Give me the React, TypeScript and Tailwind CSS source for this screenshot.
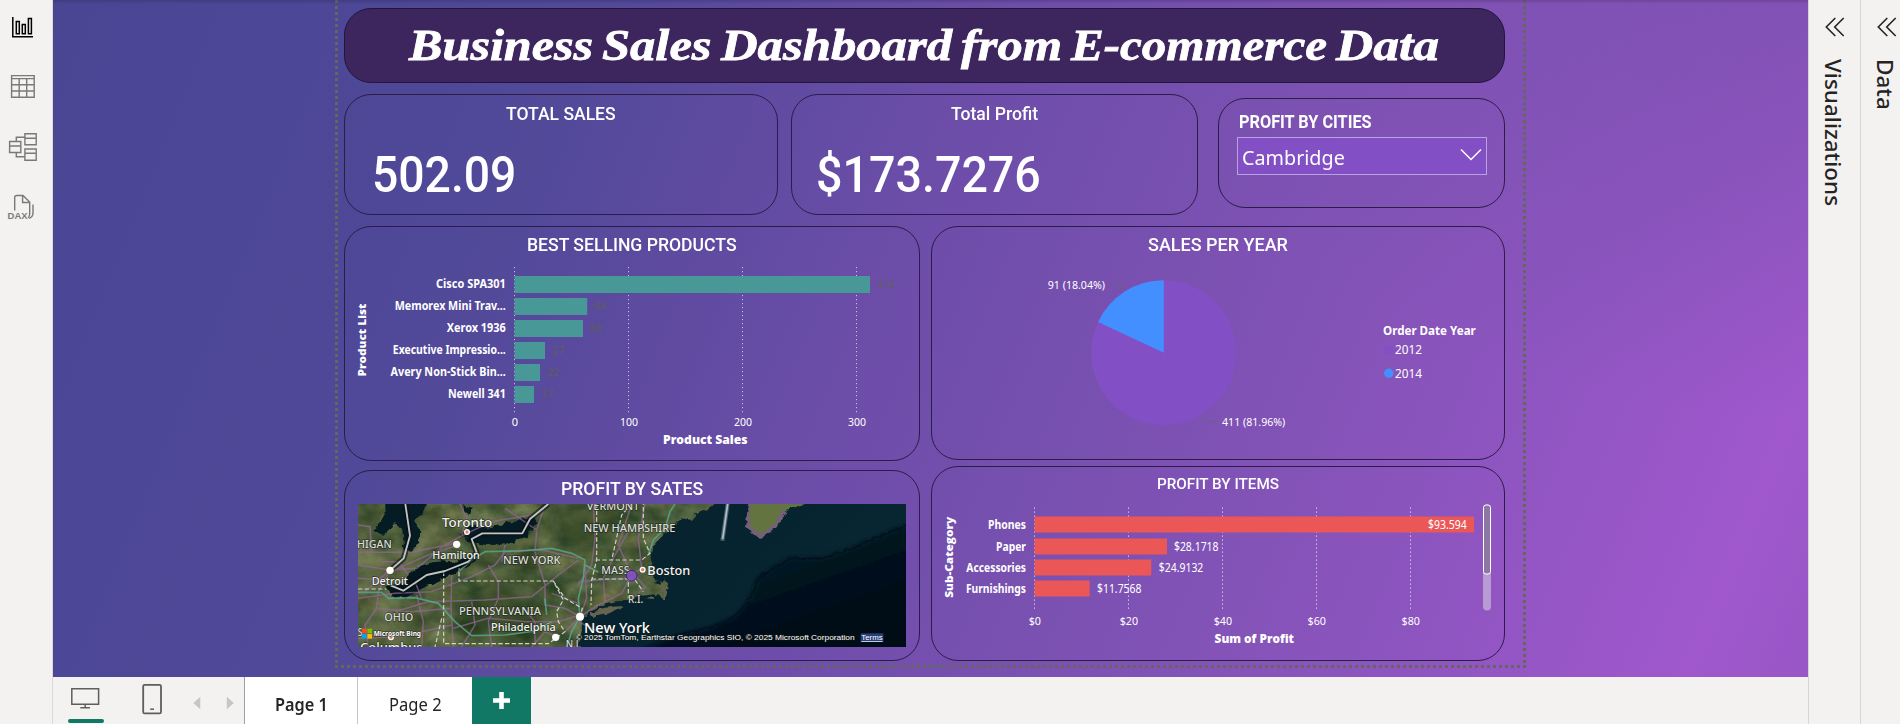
import React, { useLayoutEffect, useRef, useState } from "react";

const UI = "font-['Noto_Sans','Open_Sans',sans-serif]";
const DIN = "font-['Roboto',sans-serif]";

/* Squeezes or widens a single line of text to a given width. */
function Fit({ w, children, className = "" }: { w: number; children: string; className?: string }) {
  const ref = useRef<HTMLSpanElement>(null);
  const [scale, setScale] = useState(1);
  useLayoutEffect(() => {
    if (ref.current) setScale(w / ref.current.offsetWidth);
  }, [w]);
  return (
    <span className={`inline-block text-left whitespace-nowrap ${className}`} style={{ width: w }}>
      <span ref={ref} className="inline-block origin-left" style={{ transform: `scaleX(${scale})` }}>
        {children}
      </span>
    </span>
  );
}

function Card({ className, children }: { className: string; children: React.ReactNode }) {
  return (
    <section className={`overflow-hidden rounded-[27px] border border-[#2b1c48] ${className}`}>{children}</section>
  );
}

function Label({
  x, x2, y, children, size = 11.5, weight = 400, fill = "#fff",
}: { x: number; x2: number; y: number; children: string; size?: number; weight?: number; fill?: string }) {
  return (
    <text x={x} y={y} textLength={x2 - x} lengthAdjust="spacingAndGlyphs" fontSize={size} fontWeight={weight} fill={fill}>
      {children}
    </text>
  );
}

const products = [
  { name: "Cisco SPA301", from: 436, end: 870, value: "312", v2: 895 },
  { name: "Memorex Mini Trav...", from: 394.7, end: 587.2, value: "64", v2: 606.5 },
  { name: "Xerox 1936", from: 446.7, end: 583, value: "60", v2: 602.3 },
  { name: "Executive Impressio...", from: 392.8, end: 545, value: "27", v2: 564.3 },
  { name: "Avery Non-Stick Bin...", from: 390.5, end: 540, value: "22", v2: 559.3 },
  { name: "Newell 341", from: 447.9, end: 534, value: "17", v2: 553.3 },
];

function ProductsChart() {
  return (
    <svg className={`block h-[190px] w-[573px] ${UI}`} viewBox="345 262 573 190">
      {[514.5, 628.5, 742.5, 856.5].map((x) => (
        <line key={x} x1={x} x2={x} y1="267" y2="413" stroke="#fff" strokeOpacity=".65" strokeDasharray="1.2 2.8" />
      ))}
      {products.map((p, i) => (
        <g key={p.name}>
          <rect x="514.5" y={276 + i * 22} width={p.end - 514.5} height="17" fill="#489898" />
          <Label x={p.from} x2={505.8} y={288 + i * 22} weight={700} size={12}>{p.name}</Label>
          <Label x={p.end + 7.6} x2={p.v2} y={288 + i * 22} fill="#605e5c">{p.value}</Label>
        </g>
      ))}
      <Label x={511.7} x2={518} y={425.8}>0</Label>
      <Label x={620} x2={638} y={425.8}>100</Label>
      <Label x={734} x2={752} y={425.8}>200</Label>
      <Label x={848} x2={866} y={425.8}>300</Label>
      <g className="font-['Open_Sans',sans-serif]">
        <Label x={663} x2={747.5} y={444} weight={800} size={11.5}>Product Sales</Label>
        <g transform="translate(366 376.5) rotate(-90)">
          <Label x={0} x2={73} y={0} weight={800} size={11}>Product List</Label>
        </g>
      </g>
    </svg>
  );
}

function YearPie() {
  return (
    <svg className={`block h-[190px] w-[573px] ${UI}`} viewBox="932 262 573 190">
      <circle cx="1163.8" cy="352.7" r="72.5" fill="#8250c4" />
      <path d="M1163.8 352.7V280.2A72.5 72.5 0 0 0 1098.1 322Z" fill="#438fff" />
      <path d="M1109.4 284H1121L1124.7 290M1203 415L1207.4 421.5H1218.5" fill="none" stroke="#6b6080" />
      <Label x={1047.8} x2={1105} y={289}>91 (18.04%)</Label>
      <Label x={1222} x2={1285.3} y={426}>411 (81.96%)</Label>
      <Label x={1383} x2={1475.8} y={335} size={12.5} weight={700}>Order Date Year</Label>
      <circle cx="1388.8" cy="349.7" r="4.7" fill="#8250c4" />
      <circle cx="1388.8" cy="373.3" r="4.7" fill="#438fff" />
      <Label x={1395} x2={1422} y={353.7} size={12.5}>2012</Label>
      <Label x={1395} x2={1422} y={378} size={12.5}>2014</Label>
    </svg>
  );
}

const items = [
  { name: "Phones", from: 988, y: 517, end: 1474, value: "$93.594", v1: 1428, v2: 1466.7 },
  { name: "Paper", from: 996, y: 539, end: 1167, value: "$28.1718", v1: 1173.9, v2: 1218.6 },
  { name: "Accessories", from: 966.3, y: 560, end: 1151.3, value: "$24.9132", v1: 1158.8, v2: 1203.3 },
  { name: "Furnishings", from: 965.9, y: 581, end: 1089.6, value: "$11.7568", v1: 1097, v2: 1141.5 },
];

function ItemsChart() {
  return (
    <svg className={`block h-[152px] w-[573px] ${UI}`} viewBox="932 501.5 573 152">
      {[1034.5, 1128.5, 1222.5, 1316.5, 1410.5].map((x) => (
        <line key={x} x1={x} x2={x} y1="508" y2="612" stroke="#fff" strokeOpacity=".8" strokeDasharray="1.2 2.8" />
      ))}
      {items.map((p) => (
        <g key={p.name}>
          <rect x="1034.5" y={p.y} width={p.end - 1034.5} height="16" fill="#eb5757" />
          <Label x={p.from} x2={1026} y={p.y + 12} weight={700} size={12}>{p.name}</Label>
          <Label x={p.v1} x2={p.v2} y={p.y + 12} size={12}>{p.value}</Label>
        </g>
      ))}
      <Label x={1028.7} x2={1041} y={625}>$0</Label>
      <Label x={1119.7} x2={1138} y={625}>$20</Label>
      <Label x={1213.7} x2={1232} y={625}>$40</Label>
      <Label x={1307.5} x2={1326} y={625}>$60</Label>
      <Label x={1401.6} x2={1420} y={625}>$80</Label>
      <g className="font-['Open_Sans',sans-serif]">
        <Label x={1214.6} x2={1294} y={643} weight={800} size={11.5}>Sum of Profit</Label>
        <g transform="translate(952.6 598.3) rotate(-90)">
          <Label x={0} x2={81} y={0} weight={800} size={11}>Sub-Category</Label>
        </g>
      </g>
      <rect x="1483" y="505" width="8" height="106" rx="4" fill="#b99bd3" />
      <rect x="1483.5" y="505.5" width="7" height="69" rx="2.5" fill="#8d78a4" stroke="#fff" />
    </svg>
  );
}

function MapText({ x, x2, y, size, children, fill = "#dcdcdc", weight = 500 }: {
  x: number; x2: number; y: number; size: number; children: string; fill?: string; weight?: number;
}) {
  return (
    <text x={x} y={y} textLength={x2 - x} lengthAdjust="spacingAndGlyphs" fontSize={size} fill={fill} fontWeight={weight}
      stroke="#141a12" strokeOpacity=".6" strokeWidth="4" strokeLinejoin="round" paintOrder="stroke">
      {children}
    </text>
  );
}

function StateMap() {
  return (
    <svg className={`block h-[143px] w-[548px] ${UI}`} viewBox="39 117 1644 429" preserveAspectRatio="none">
      <defs>
        <filter id="terrain" x="0" y="0" width="100%" height="100%" colorInterpolationFilters="sRGB">
          <feTurbulence type="fractalNoise" baseFrequency=".012 .016" numOctaves="5" seed="8" result="n" />
          <feColorMatrix in="n" type="matrix" values="0.38 0.2 0 0 0.02  0.28 0.22 0 0 0.12  0.2 0.2 0 0 0.03  0 0 0 0 1" />
        </filter>
        <filter id="coast" x="-5%" y="-5%" width="110%" height="110%" colorInterpolationFilters="sRGB">
          <feTurbulence type="fractalNoise" baseFrequency=".05" numOctaves="2" seed="2" />
          <feDisplacementMap in="SourceGraphic" scale="20" xChannelSelector="R" yChannelSelector="G" />
        </filter>
        <linearGradient id="sea" x1="0" y1="0" x2="1" y2=".5">
          <stop offset="0" stopColor="#06212c" />
          <stop offset=".5" stopColor="#062430" />
          <stop offset="1" stopColor="#082833" />
        </linearGradient>
        <linearGradient id="deep" x1="0" y1="0" x2=".75" y2="1">
          <stop offset="0" stopColor="#062030" />
          <stop offset=".5" stopColor="#041420" />
          <stop offset="1" stopColor="#010813" />
        </linearGradient>
        <filter id="soft"><feGaussianBlur stdDeviation="8" /></filter>
        <filter id="haze" x="-20%" y="-20%" width="140%" height="140%"><feGaussianBlur stdDeviation="28" /></filter>
      </defs>
      <rect x="39" y="117" width="1644" height="429" fill="#46532f" />
      <rect x="39" y="117" width="1120" height="429" filter="url(#terrain)" />
      <g filter="url(#haze)">
        <path fill="#1e3a1c" fillOpacity=".5" d="M400 350L560 360 640 430 560 540 330 540 320 440ZM600 120L860 110 800 250 640 260ZM39 120L120 120 90 190 39 200Z" />
        <path fill="#8a8a5c" fillOpacity=".35" d="M39 230L130 240 200 300 130 360 39 360ZM60 420L260 420 250 546 60 546ZM220 160L330 170 300 240 200 270Z" />
      </g>
      <g filter="url(#coast)">
        <path fill="url(#sea)" d="M1135 95L1100 125 1060 145 1040 165 1010 160 985 185 950 215 925 250 915 285 925 310 920 335 945 360 960 340 968 370 955 400 925 385 890 390 850 405 800 412 740 435 715 460 712 500 700 530 695 580H1730V95Z" />
        <path fill="#061c25" d="M120 100L122 150 84 196 112 212 150 178 172 192 178 255 200 262 222 228 222 196 207 165 250 122 255 100Z" />
        <path fill="#061c25" d="M345 205L378 180 430 188 500 172 560 155 575 176 545 215 480 238 420 240 365 225ZM355 120L380 130 372 150 358 140Z" />
        <path fill="#04171f" d="M122 362L150 362 178 358 205 310 260 292 350 285 398 265 395 285 340 318 290 345 225 372 180 402 140 392Z" />
        <path fill="#75607a" d="M1218 95L1205 150 1204 187 1245 222 1290 192 1320 145 1330 95Z" />
        <path fill="#647440" d="M1224 95L1212 150 1214 182 1245 206 1284 184 1312 138 1380 117 1390 95Z" />
        <path fill="#66644f" d="M735 445L775 428 838 422 800 442 745 458ZM900 400L930 392 928 402ZM945 345L968 375 960 405 950 404 955 378Z" />
      </g>
      <path fill="url(#deep)" filter="url(#soft)" d="M1710 170L1600 215 1520 250 1430 280 1340 278 1280 310 1235 345 1215 400 1170 455 1090 490 980 515 880 560H1710Z" />
      <path fill="none" stroke="#020c15" strokeOpacity=".6" strokeWidth="6" filter="url(#coast)" d="M1690 178L1600 215 1520 250 1430 280 1340 278 1280 310 1235 345 1215 400 1170 455 1090 490 980 515" />
      <g fill="none" stroke="#94669a" strokeOpacity=".7" strokeWidth="4.5" strokeLinejoin="round">
        <path d="M39 180L75 185 80 260 39 262M39 300L135 315 215 310 300 240 345 215 440 170 560 150M80 262H200L330 235M130 320L60 380M135 320L250 270 340 240M345 117L365 160 350 215M135 315L100 380 95 430 60 480 70 546M39 400L150 385 260 380 380 335 450 300 480 260 590 255 700 280M320 330L318 430 325 546M215 390L235 470 230 546M150 440L250 410 420 405 560 395 640 330 700 285M575 200L570 260 600 360 600 420 660 430 705 455M430 300L460 350 460 400 430 470 440 546M325 490L430 460 540 470 640 470 705 450M720 300L725 400 705 455 660 500M705 455L760 420 830 385 860 330 890 310M745 117L750 220 740 300 700 360M860 117L820 240 855 320M560 546L600 500 635 515M620 385L700 415M700 350L760 345 860 340M100 430L200 440 320 430M480 130L575 195 600 120M780 410L775 340 810 270 850 200M870 330L900 365 880 385M900 117L880 220 890 310M230 400L210 350M39 520L150 515 230 500 320 480" />
        <path d="M540 435L570 470 570 540M480 240L470 290M380 410L390 480 350 546M760 500L700 470M110 290L160 290 190 330M39 340L120 345" />
      </g>
      <g fill="none" stroke="#5aa88b" strokeOpacity=".8" strokeWidth="5" strokeLinejoin="round">
        <path d="M39 382H110L130 400 210 398 280 415 330 470 380 512 480 510 570 498 620 470M340 320L395 275 420 260 520 258 620 250 680 265 720 285 715 340 700 400 705 455 680 500 665 546M720 300L760 322M910 270L925 225 960 190 975 140 990 117M600 400L605 450" />
      </g>
      <g fill="none" stroke="#d2d4c8" strokeWidth="3.5" strokeDasharray="13 7">
        <path d="M39 372H125M296 320V536H610L660 500 640 470 635 440 655 405 625 348H342V310M625 348L660 400 712 430 705 455M290 460L270 546M755 117V285L740 345 738 420M860 117L830 150 800 285M752 285H890L915 265 895 220V117M740 342H850V400M850 345H870L895 380" />
      </g>
      <g fill="none" strokeLinejoin="round">
        <path stroke="#0a0f12" strokeOpacity=".6" strokeWidth="17" d="M181 117L195 212 176 280 142 310M138 362L175 377 245 330 300 318 370 290 395 262 380 222 412 205H532L555 162 610 117" />
        <path stroke="#c0c5c6" strokeWidth="5.5" d="M181 117L195 212 176 280 142 310M138 362L175 377 245 330 300 318 370 290 395 262 380 222 412 205H532L555 162 610 117" />
        <path stroke="#4d6670" strokeWidth="12" d="M1148 117L1132 227" />
        <path stroke="#b3c1c6" strokeWidth="5" d="M1148 117L1133 222" />
      </g>
      <MapText x={291} x2={442} y={185} size={37} fill="#f2f2f2">Toronto</MapText>
      <MapText x={262} x2={404} y={281} size={30} fill="#f2f2f2">Hamilton</MapText>
      <MapText x={80} x2={189} y={360} size={31} fill="#f2f2f2">Detroit</MapText>
      <MapText x={36} x2={140} y={250} size={31}>HIGAN</MapText>
      <MapText x={474} x2={647} y={296} size={31}>NEW YORK</MapText>
      <MapText x={725} x2={883} y={135} size={31}>VERMONT</MapText>
      <MapText x={716} x2={991} y={200} size={31}>NEW HAMPSHIRE</MapText>
      <MapText x={769} x2={862} y={328} size={31}>MASS.</MapText>
      <MapText x={849} x2={895} y={413} size={31}>R.I.</MapText>
      <MapText x={342} x2={588} y={451} size={31}>PENNSYLVANIA</MapText>
      <MapText x={118} x2={205} y={468} size={31}>OHIO</MapText>
      <MapText x={438} x2={632} y={497} size={33} fill="#f2f2f2">Philadelphia</MapText>
      <MapText x={662} x2={708} y={548} size={30}>N.J.</MapText>
      <MapText x={45} x2={233} y={562} size={36} fill="#f2f2f2">Columbus</MapText>
      <MapText x={38} x2={52} y={512} size={30}>S</MapText>
      <g fill="#fff">
        <circle cx="335" cy="238" r="11" /><circle cx="135" cy="316" r="11" />
        <circle cx="705" cy="455" r="12" /><circle cx="632" cy="517" r="11" />
      </g>
      <g fill="#e58264" stroke="#fff" strokeWidth="4">
        <circle cx="366" cy="201" r="7" /><circle cx="138" cy="517" r="7" /><circle cx="893" cy="314" r="7" />
      </g>
      <circle cx="860" cy="332" r="16" fill="#8250c4" fillOpacity=".85" stroke="#43217c" strokeWidth="3" />
      <MapText x={907} x2={1036} y={331} size={38} fill="#f5f5f5">Boston</MapText>
      <MapText x={717} x2={915} y={503} size={43} fill="#fff">New York</MapText>
      <rect x="51" y="491" width="14" height="14" fill="#f25022" /><rect x="67" y="491" width="14" height="14" fill="#7fba00" />
      <rect x="51" y="507" width="14" height="14" fill="#00a4ef" /><rect x="67" y="507" width="14" height="14" fill="#ffb900" />
      <MapText x={86} x2={228} y={514} size={21} fill="#fff" weight={700}>Microsoft Bing</MapText>
      <g className="font-['Liberation_Sans',sans-serif]">
        <MapText x={692} x2={1529} y={525} size={22} fill="#fff">© 2025 TomTom, Earthstar Geographics SIO, © 2025 Microsoft Corporation</MapText>
        <rect x="1547" y="505" width="68" height="26" fill="#34509a" fillOpacity=".75" />
        <text x="1549" y="525" fontSize="22" fill="#fff" textLength="64" lengthAdjust="spacingAndGlyphs" textDecoration="underline">Terms</text>
      </g>
    </svg>
  );
}

function Rail() {
  return (
    <nav className="flex w-[53px] shrink-0 flex-col border-r border-[#dcdad8] bg-[#f3f2f1] pt-[16px]">
      <svg className="ml-[11px] h-[23px] w-[24px]" viewBox="11 16 24 23" fill="none" stroke="#000" strokeWidth="1.5">
        <path d="M12.8 17V36.8H33" />
        <path d="M16.3 21.5h3v12.3h-3zM22.3 24.5h3v9.3h-3zM28.4 18.5h3v15.3h-3z" />
      </svg>
      <svg className="mt-[35px] ml-[10px] h-[26px] w-[26px]" viewBox="10 74 26 26" fill="none" stroke="#7b7977" strokeWidth="1.4">
        <path d="M11.6 75.6h22.6v21.6H11.6zM11.6 78.6h22.6M11.6 84.8h22.6M11.6 91h22.6M19.2 78.6v18.6M26.7 78.6v18.6" />
      </svg>
      <svg className="mt-[32px] ml-[8px] h-[30px] w-[30px]" viewBox="8 132 30 30" fill="none" stroke="#7b7977" strokeWidth="1.4">
        <path d="M9.6 141.5h11.2v11H9.6zM9.6 146h11.2M24.9 133.8h11.3v11H24.9zM24.9 138.3h11.3M24.9 149h11.3v11.3H24.9zM24.9 153.3h11.3M16.3 141.5v-4.3h8.6M16.3 152.5v4.2h8.6" />
      </svg>
      <svg className="mt-[31px] ml-[7px] h-[28px] w-[30px]" viewBox="7 193 30 28" fill="none" stroke="#7b7977" strokeWidth="1.4">
        <path d="M14.7 210.5V197.5q0-2 2-2h6.3l6.7 6.5v11.5q0 3-1.6 4.3M22.6 195.7v6.8h7M33 204.5v8.5q0 4-4 5.3" />
        <text x="7.6" y="218.6" fontSize="9.5" fontWeight="700" fill="#7b7977" stroke="none" textLength="20" lengthAdjust="spacingAndGlyphs" className="font-['Liberation_Sans',sans-serif]">DAX</text>
      </svg>
    </nav>
  );
}

function SidePanel({ title, w, className }: { title: string; w: string; className: string }) {
  return (
    <aside className={`flex shrink-0 flex-col border-l border-[#d9d7d5] bg-[#f3f2f1] ${w} ${className}`}>
      <svg className="h-[20px] w-[20px] shrink-0" viewBox="0 0 20 20" fill="none" stroke="#252423" strokeWidth="1.6">
        <path d="M10.3 1L1.3 10l9 9M18.7 1l-9 9 9 9" />
      </svg>
      <div className={`mt-[21.5px] text-[22.5px] leading-[30px] font-medium text-[#252423] [writing-mode:vertical-rl] -ml-[7.5px] w-[30px] ${UI}`}>
        {title}
      </div>
    </aside>
  );
}

function BottomBar() {
  return (
    <footer className={`flex h-[47px] bg-[#f3f2f1] text-[#252423] ${UI}`}>
      <svg className="h-[47px] w-[191px]" viewBox="53 677 191 47" fill="none" stroke="#605e5c" strokeWidth="1.5">
        <path d="M71.8 688.8h26.8v15.4H71.8zM85.2 704v3.5M80.3 707.7h9.6" />
        <rect x="143.2" y="684.8" width="17.8" height="28.6" rx="1.5" strokeWidth="1.8" />
        <path d="M150.2 709.2h3.8" />
        <rect x="68" y="719" width="36" height="4" rx="2" fill="#117865" stroke="none" />
        <path d="M200.3 696.8v12.5l-7-6.2zM226.8 696.8v12.5l7-6.2z" fill="#c8c6c4" stroke="none" />
      </svg>
      <div className="flex w-[114px] items-center justify-center border-x border-l-[#a19f9d] border-r-[#c8c6c4] bg-white pt-[6px]">
        <Fit w={53} className="text-[17.5px] leading-6 font-semibold">Page 1</Fit>
      </div>
      <div className="flex w-[114px] items-center justify-center bg-white pt-[6px]">
        <Fit w={53} className="text-[17.5px] leading-6">Page 2</Fit>
      </div>
      <button className="flex w-[59px] items-center justify-center bg-[#117865] pb-px">
        <svg className="h-[17px] w-[17px]" viewBox="0 0 17 17" stroke="#fff" strokeWidth="4.6"><path d="M8.5 0v17M0 8.5h17" /></svg>
      </button>
    </footer>
  );
}

const dotsV = "w-[3px] bg-[repeating-linear-gradient(180deg,#67655f_0_3px,transparent_3px_6px)]";

export default function App() {
  return (
    <div className="flex h-[724px] w-[1900px] overflow-hidden bg-[#f3f2f1]">
      <Rail />
      <div className="flex w-[1755px] shrink-0 flex-col">
        <main className="relative h-[677px] bg-[radial-gradient(ellipse_620px_420px_at_100%_0%,rgba(112,78,168,0.55),transparent),linear-gradient(112deg,#4a4694_0%,#4c4796_14%,#524999_27%,#6b4da8_46%,#8353b7_70%,#8f55c1_81%,#a058cc_94%,#9856c6_100%)]">
          <div className="ml-[282px] flex h-[668px] w-[1191px] flex-col">
            <div className="flex min-h-0 flex-1">
              <div className={dotsV} />
              <div className="ml-[6px] w-[1161px] shrink-0 pt-[8px]">
                <header className="flex h-[75px] items-start rounded-[27px] border border-[#24153c] bg-[#3d255d] pt-[10px] pl-[64px] leading-[52px] text-white italic [-webkit-text-stroke:0.8px_#fff] font-['Liberation_Serif',serif]">
                  <h1 className="flex gap-[9px] text-[45px] leading-[52px] font-bold">
                    <Fit w={184}>Business</Fit>
                    <Fit w={110}>Sales</Fit>
                    <Fit w={231}>Dashboard</Fit>
                    <Fit w={101}>from</Fit>
                    <Fit w={256}>E-commerce</Fit>
                    <Fit w={103}>Data</Fit>
                  </h1>
                </header>

                <div className={`mt-[11px] flex h-[120.5px] items-start text-white ${DIN}`}>
                  <Card className="h-[120.5px] w-[434px]">
                    <div className="pt-[8px] text-center text-[18px] leading-[21px] font-medium"><Fit w={110}>TOTAL SALES</Fit></div>
                    <div className="pt-[22px] pl-[26.5px] text-[49.5px] leading-[58px] font-medium"><Fit w={144}>502.09</Fit></div>
                  </Card>
                  <Card className="ml-[13px] h-[120.5px] w-[406.5px]">
                    <div className="pt-[8px] text-center text-[18px] leading-[21px] font-medium"><Fit w={87}>Total Profit</Fit></div>
                    <div className="pt-[22px] pl-[24px] text-[49.5px] leading-[58px] font-medium"><Fit w={225}>$173.7276</Fit></div>
                  </Card>
                  <Card className="mt-[4px] ml-[20.5px] h-[110px] w-[287px]">
                    <div className="pt-[13px] pl-[20px] text-[17.5px] leading-[21px] font-bold"><Fit w={133}>PROFIT BY CITIES</Fit></div>
                    <div className={`mt-[4px] ml-[17.5px] flex h-[38px] w-[250px] items-start justify-between border border-[#b9a2dd] bg-[#8250c4] pr-[4px] pl-[4px] text-[20.5px] leading-[38px] ${UI}`}>
                      <Fit w={103}>Cambridge</Fit>
                      <svg className="mt-[10px] h-[14px] w-[22px]" viewBox="0 0 22 14" fill="none" stroke="#fff" strokeWidth="1.5"><path d="M1 1.5l10 10 10-10" /></svg>
                    </div>
                  </Card>
                </div>

                <div className={`mt-[11.5px] flex justify-between text-white ${DIN}`}>
                  <div className="w-[576px]">
                    <Card className="h-[235px]">
                      <h2 className="h-[35px] pt-[8px] text-center text-[18.5px] leading-[21px] font-medium"><Fit w={210}>BEST SELLING PRODUCTS</Fit></h2>
                      <ProductsChart />
                    </Card>
                    <Card className="mt-[9px] h-[191px]">
                      <h2 className="h-[32.5px] pt-[8px] text-center text-[18.5px] leading-[20px] font-medium"><Fit w={142}>PROFIT BY SATES</Fit></h2>
                      <div className="pl-[13px]"><StateMap /></div>
                    </Card>
                  </div>
                  <div className="w-[574.5px]">
                    <Card className="h-[234px]">
                      <h2 className="h-[35px] pt-[8px] text-center text-[18.5px] leading-[21px] font-medium"><Fit w={140}>SALES PER YEAR</Fit></h2>
                      <YearPie />
                    </Card>
                    <Card className="mt-[6px] h-[195px]">
                      <h2 className="h-[34px] pt-[8px] text-center text-[15.5px] leading-[19px] font-medium"><Fit w={122}>PROFIT BY ITEMS</Fit></h2>
                      <ItemsChart />
                    </Card>
                  </div>
                </div>
              </div>
              <div className={`ml-auto shrink-0 ${dotsV}`} />
            </div>
            <div className="h-[3px] bg-[repeating-linear-gradient(90deg,#67655f_0_3px,transparent_3px_6px)]" />
          </div>
          <div className="absolute inset-x-0 top-0 h-[4px] bg-linear-to-b from-black/15 to-transparent" />
        </main>
        <BottomBar />
      </div>
      <SidePanel title="Visualizations" w="w-[52px]" className="pt-[17px] pl-[16px]" />
      <SidePanel title="Data" w="w-[40px]" className="pt-[17px] pl-[16px]" />
    </div>
  );
}
